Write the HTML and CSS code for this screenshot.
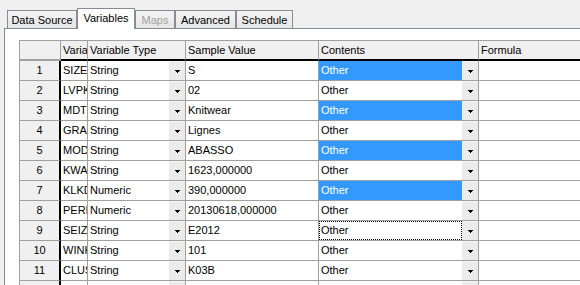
FILE: index.html
```html
<!DOCTYPE html>
<html>
<head>
<meta charset="utf-8">
<link rel="stylesheet" href="styles.css">
</head>
<body>
<div class="tabs">
  <div class="tab t-ds">Data Source</div>
  <div class="tab sel t-var">Variables</div>
  <div class="tab dis t-maps">Maps</div>
  <div class="tab t-adv">Advanced</div>
  <div class="tab t-sch">Schedule</div>
</div>
<div class="panel">
  <div class="grid">
    <div class="hd corner"></div>
    <div class="hd">Varia</div>
    <div class="hd">Variable Type</div>
    <div class="hd">Sample Value</div>
    <div class="hd">Contents</div>
    <div class="hd">Formula</div>

    <div class="rh">1</div><div class="c">SIZE</div>
    <div class="c cb"><span class="val">String</span><span class="btn"><svg width="5" height="3" viewBox="0 0 5 3"><path d="M0 0h5v1H0zM1 1h3v1H1zM2 2h1v1H2z"/></svg></span></div>
    <div class="c">S</div>
    <div class="c cb"><span class="val hl">Other</span><span class="btn"><svg width="5" height="3" viewBox="0 0 5 3"><path d="M0 0h5v1H0zM1 1h3v1H1zM2 2h1v1H2z"/></svg></span></div>
    <div class="c"></div>

    <div class="rh">2</div><div class="c">LVPK</div>
    <div class="c cb"><span class="val">String</span><span class="btn"><svg width="5" height="3" viewBox="0 0 5 3"><path d="M0 0h5v1H0zM1 1h3v1H1zM2 2h1v1H2z"/></svg></span></div>
    <div class="c">02</div>
    <div class="c cb"><span class="val">Other</span><span class="btn"><svg width="5" height="3" viewBox="0 0 5 3"><path d="M0 0h5v1H0zM1 1h3v1H1zM2 2h1v1H2z"/></svg></span></div>
    <div class="c"></div>

    <div class="rh">3</div><div class="c">MDT</div>
    <div class="c cb"><span class="val">String</span><span class="btn"><svg width="5" height="3" viewBox="0 0 5 3"><path d="M0 0h5v1H0zM1 1h3v1H1zM2 2h1v1H2z"/></svg></span></div>
    <div class="c">Knitwear</div>
    <div class="c cb"><span class="val hl">Other</span><span class="btn"><svg width="5" height="3" viewBox="0 0 5 3"><path d="M0 0h5v1H0zM1 1h3v1H1zM2 2h1v1H2z"/></svg></span></div>
    <div class="c"></div>

    <div class="rh">4</div><div class="c">GRA</div>
    <div class="c cb"><span class="val">String</span><span class="btn"><svg width="5" height="3" viewBox="0 0 5 3"><path d="M0 0h5v1H0zM1 1h3v1H1zM2 2h1v1H2z"/></svg></span></div>
    <div class="c">Lignes</div>
    <div class="c cb"><span class="val">Other</span><span class="btn"><svg width="5" height="3" viewBox="0 0 5 3"><path d="M0 0h5v1H0zM1 1h3v1H1zM2 2h1v1H2z"/></svg></span></div>
    <div class="c"></div>

    <div class="rh">5</div><div class="c">MOD</div>
    <div class="c cb"><span class="val">String</span><span class="btn"><svg width="5" height="3" viewBox="0 0 5 3"><path d="M0 0h5v1H0zM1 1h3v1H1zM2 2h1v1H2z"/></svg></span></div>
    <div class="c">ABASSO</div>
    <div class="c cb"><span class="val hl">Other</span><span class="btn"><svg width="5" height="3" viewBox="0 0 5 3"><path d="M0 0h5v1H0zM1 1h3v1H1zM2 2h1v1H2z"/></svg></span></div>
    <div class="c"></div>

    <div class="rh">6</div><div class="c">KWA</div>
    <div class="c cb"><span class="val">String</span><span class="btn"><svg width="5" height="3" viewBox="0 0 5 3"><path d="M0 0h5v1H0zM1 1h3v1H1zM2 2h1v1H2z"/></svg></span></div>
    <div class="c">1623,000000</div>
    <div class="c cb"><span class="val">Other</span><span class="btn"><svg width="5" height="3" viewBox="0 0 5 3"><path d="M0 0h5v1H0zM1 1h3v1H1zM2 2h1v1H2z"/></svg></span></div>
    <div class="c"></div>

    <div class="rh">7</div><div class="c">KLKD</div>
    <div class="c cb"><span class="val">Numeric</span><span class="btn"><svg width="5" height="3" viewBox="0 0 5 3"><path d="M0 0h5v1H0zM1 1h3v1H1zM2 2h1v1H2z"/></svg></span></div>
    <div class="c">390,000000</div>
    <div class="c cb"><span class="val hl">Other</span><span class="btn"><svg width="5" height="3" viewBox="0 0 5 3"><path d="M0 0h5v1H0zM1 1h3v1H1zM2 2h1v1H2z"/></svg></span></div>
    <div class="c"></div>

    <div class="rh">8</div><div class="c">PERI</div>
    <div class="c cb"><span class="val">Numeric</span><span class="btn"><svg width="5" height="3" viewBox="0 0 5 3"><path d="M0 0h5v1H0zM1 1h3v1H1zM2 2h1v1H2z"/></svg></span></div>
    <div class="c">20130618,000000</div>
    <div class="c cb"><span class="val">Other</span><span class="btn"><svg width="5" height="3" viewBox="0 0 5 3"><path d="M0 0h5v1H0zM1 1h3v1H1zM2 2h1v1H2z"/></svg></span></div>
    <div class="c"></div>

    <div class="rh">9</div><div class="c">SEIZ</div>
    <div class="c cb"><span class="val">String</span><span class="btn"><svg width="5" height="3" viewBox="0 0 5 3"><path d="M0 0h5v1H0zM1 1h3v1H1zM2 2h1v1H2z"/></svg></span></div>
    <div class="c">E2012</div>
    <div class="c cb"><span class="val focus">Other</span><span class="btn"><svg width="5" height="3" viewBox="0 0 5 3"><path d="M0 0h5v1H0zM1 1h3v1H1zM2 2h1v1H2z"/></svg></span></div>
    <div class="c"></div>

    <div class="rh">10</div><div class="c">WINK</div>
    <div class="c cb"><span class="val">String</span><span class="btn"><svg width="5" height="3" viewBox="0 0 5 3"><path d="M0 0h5v1H0zM1 1h3v1H1zM2 2h1v1H2z"/></svg></span></div>
    <div class="c">101</div>
    <div class="c cb"><span class="val">Other</span><span class="btn"><svg width="5" height="3" viewBox="0 0 5 3"><path d="M0 0h5v1H0zM1 1h3v1H1zM2 2h1v1H2z"/></svg></span></div>
    <div class="c"></div>

    <div class="rh">11</div><div class="c">CLUS</div>
    <div class="c cb"><span class="val">String</span><span class="btn"><svg width="5" height="3" viewBox="0 0 5 3"><path d="M0 0h5v1H0zM1 1h3v1H1zM2 2h1v1H2z"/></svg></span></div>
    <div class="c">K03B</div>
    <div class="c cb"><span class="val">Other</span><span class="btn"><svg width="5" height="3" viewBox="0 0 5 3"><path d="M0 0h5v1H0zM1 1h3v1H1zM2 2h1v1H2z"/></svg></span></div>
    <div class="c"></div>

    <div class="rh">12</div><div class="c">STA</div>
    <div class="c cb"><span class="val">String</span><span class="btn"><svg width="5" height="3" viewBox="0 0 5 3"><path d="M0 0h5v1H0zM1 1h3v1H1zM2 2h1v1H2z"/></svg></span></div>
    <div class="c"></div>
    <div class="c cb"><span class="val">Other</span><span class="btn"><svg width="5" height="3" viewBox="0 0 5 3"><path d="M0 0h5v1H0zM1 1h3v1H1zM2 2h1v1H2z"/></svg></span></div>
    <div class="c"></div>
  </div>
</div>
</body>
</html>
```
FILE: styles.css
```css
html, body {
  margin: 0;
  padding: 0;
  background: #f0f0f0;
  overflow: hidden;
  width: 580px;
  height: 285px;
}
body {
  font-family: "Liberation Sans", Arial, sans-serif;
  font-size: 11px;
  color: #000;
}
.tabs {
  display: flex;
  align-items: flex-end;
  height: 28px;
  padding-left: 7px;
  box-sizing: border-box;
}
.tab {
  box-sizing: border-box;
  height: 18px;
  line-height: 18px;
  text-align: center;
  border: 1px solid #898c95;
  border-bottom: none;
  background: linear-gradient(#f4f4f4, #e6e6e6);
  white-space: nowrap;
}
.tab.sel {
  height: 21px;
  line-height: 18px;
  margin-bottom: -1px;
  background: #fff;
  position: relative;
  z-index: 1;
}
.tab.dis { color: #a0a0a0; }
.t-ds { width: 70px; }
.t-var { width: 58px; }
.t-maps { width: 40px; }
.t-adv { width: 61px; }
.t-sch { width: 57px; }

.panel {
  margin-left: 4px;
  border-top: 1px solid #898c95;
  border-left: 1px solid #898c95;
  background: #fff;
  padding: 11px 0 0 14px;
  height: 300px;
}
.grid {
  display: grid;
  grid-template-columns: 41px 27px 98px 133px 160px 140px;
  grid-auto-rows: 20px;
  width: max-content;
  border-left: 1px solid #a0a0a0;
  border-top: 1px solid #a0a0a0;
  background: #fff;
}
.grid > div {
  box-sizing: border-box;
  border-right: 1px solid #a0a0a0;
  border-bottom: 1px solid #a0a0a0;
  overflow: hidden;
  white-space: nowrap;
}
.hd {
  background: #f0f0f0;
  line-height: 18px;
  padding-left: 2px;
  border-bottom: 2px solid #000 !important;
}
.hd.corner {
  border-bottom-color: #a0a0a0 !important;
  padding: 0;
}
.rh {
  background: #f0f0f0;
  text-align: center;
  line-height: 19px;
  border-right: 2px solid #000 !important;
}
.c {
  line-height: 19px;
  padding-left: 2px;
}
.c.cb {
  padding-left: 0;
  display: flex;
}
.val {
  flex: 1;
  padding-left: 2px;
  overflow: hidden;
  box-sizing: border-box;
}
.val.hl {
  background: #3399ff;
  color: #fff;
}
.val.focus {
  outline: 1px dotted #000;
  outline-offset: -1px;
}
.btn {
  width: 16px;
  flex: none;
  background: #ebebeb;
  border-top: 1px solid #f6f6f6;
  box-sizing: border-box;
  display: flex;
  align-items: center;
  justify-content: center;
}
.btn svg {
  display: block;
  shape-rendering: crispEdges;
  fill: #000;
}
```
